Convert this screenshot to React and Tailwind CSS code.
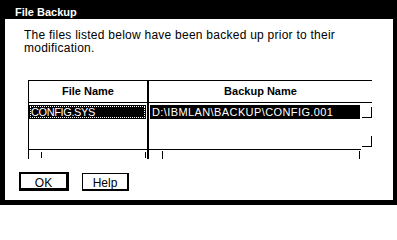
export default function App() {
  return (
    <div className="h-[208px] w-[397px] bg-white text-black font-['Liberation_Sans',Arial,sans-serif]">
      <div className="flex h-[205px] flex-col border-b-[5px] border-l-[5px] border-r-[4px] border-black">
        <div className="h-[19px] bg-black pl-[10px] pt-[6px] text-[11px] font-bold leading-[13px] text-white">
          File Backup
        </div>
        <p className="ml-[19px] mt-[10px] text-[12px] leading-[13px] tracking-[0.25px]">
          The files listed below have been backed up prior to their
          <br />
          modification.
        </p>
        <div className="ml-[23px] mt-[25px] flex h-[79px]">
          <div className="flex w-[119px] flex-col border-l border-black">
            <div className="flex h-[23px] items-center justify-center border-y border-black text-[11px] font-bold">
              File Name
            </div>
            <div className="mt-[2px] h-[14px] w-[117px] bg-black pl-[2px] text-[11px] leading-[14px] tracking-[-0.4px] text-white outline-1 outline-dotted outline-white -outline-offset-2">
              CONFIG.SYS
            </div>
            <div className="mt-[30px] h-px bg-black" />
            <div className="flex">
              <div className="ml-[12px] mt-[2px] h-[6px] w-px bg-black" />
              <div className="ml-[103px] mt-[2px] h-[6px] w-px bg-black" />
            </div>
          </div>
          <div className="w-[2px] bg-black" />
          <div className="flex w-[223px] flex-col">
            <div className="flex h-[23px] items-center justify-center border-y border-black text-[11px] font-bold">
              Backup Name
            </div>
            <div className="mt-[2px] flex h-[14px]">
              <div className="ml-[1px] w-[210px] bg-black pl-[2px] text-[11px] leading-[14px] tracking-[0.4px] text-white">
                D:\IBMLAN\BACKUP\CONFIG.001
              </div>
              <div className="ml-[2px] mt-[2px] h-[11px] w-[10px] border-b border-r border-black" />
            </div>
            <div className="ml-[213px] mt-[17px] h-[11px] w-[10px] border-b border-r border-black" />
            <div className="mt-[2px] h-px w-[212px] bg-black" />
            <div className="flex">
              <div className="ml-[13px] mt-[1px] h-[8px] w-px bg-black" />
              <div className="ml-[196px] mt-[1px] h-[8px] w-px bg-black" />
            </div>
          </div>
        </div>
        <div className="ml-[14px] mt-[13px] flex items-end gap-[13px]">
          <div className="flex h-[19px] w-[50px] justify-center border-2 border-b-[3px] border-r-[3px] border-black pt-[3px] text-[12px] leading-[12px]">
            OK
          </div>
          <div className="flex h-[18px] w-[47px] justify-center border border-b-2 border-r-2 border-black pt-[3px] text-[12px] leading-[12px]">
            Help
          </div>
        </div>
      </div>
    </div>
  );
}
